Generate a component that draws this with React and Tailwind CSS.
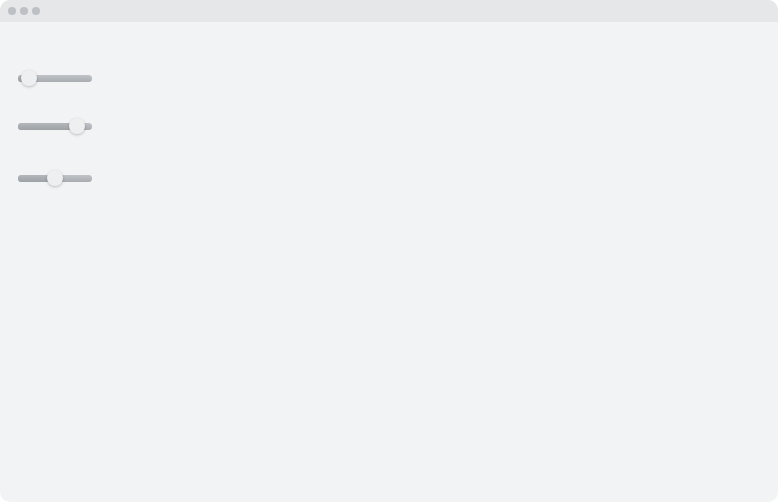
// thumb offsets measured from the track's left edge
const sliders = [
  { left: 3, gap: 'mt-[48px]' },
  { left: 51, gap: 'mt-[32px]' },
  { left: 29, gap: 'mt-[36px]' },
];

function Slider({ left, gap }) {
  return (
    <div className={`relative w-[74px] h-4 flex items-center ${gap}`}>
      <div className="w-full h-[7px] rounded-full bg-gradient-to-b from-[#c0c3c8] to-[#a8abb0] overflow-hidden">
        <div className="h-full bg-gradient-to-b from-[#b3b6bb] to-[#9ea1a6]" style={{ width: left + 8 }} />
      </div>
      <div
        className="absolute top-0 w-4 h-4 rounded-full bg-[#eeeff1] shadow-[0_1px_3px_rgba(0,0,0,0.22)]"
        style={{ left }}
      />
    </div>
  );
}

export default function App() {
  return (
    <div className="w-[778px] h-[502px] bg-white">
      <div className="w-full h-full rounded-[10px] overflow-hidden bg-[#f2f3f5] flex flex-col">
        {/* Title bar */}
        <div className="h-[22px] bg-[#e6e7e9] flex items-center gap-1 pl-2 shrink-0">
          <div className="w-2 h-2 rounded-full bg-[#bdc0c5]" />
          <div className="w-2 h-2 rounded-full bg-[#bdc0c5]" />
          <div className="w-2 h-2 rounded-full bg-[#bdc0c5]" />
        </div>

        {/* Sliders */}
        <div className="flex flex-col pl-[18px]">
          {sliders.map((s, i) => (
            <Slider key={i} {...s} />
          ))}
        </div>
      </div>
    </div>
  );
}
